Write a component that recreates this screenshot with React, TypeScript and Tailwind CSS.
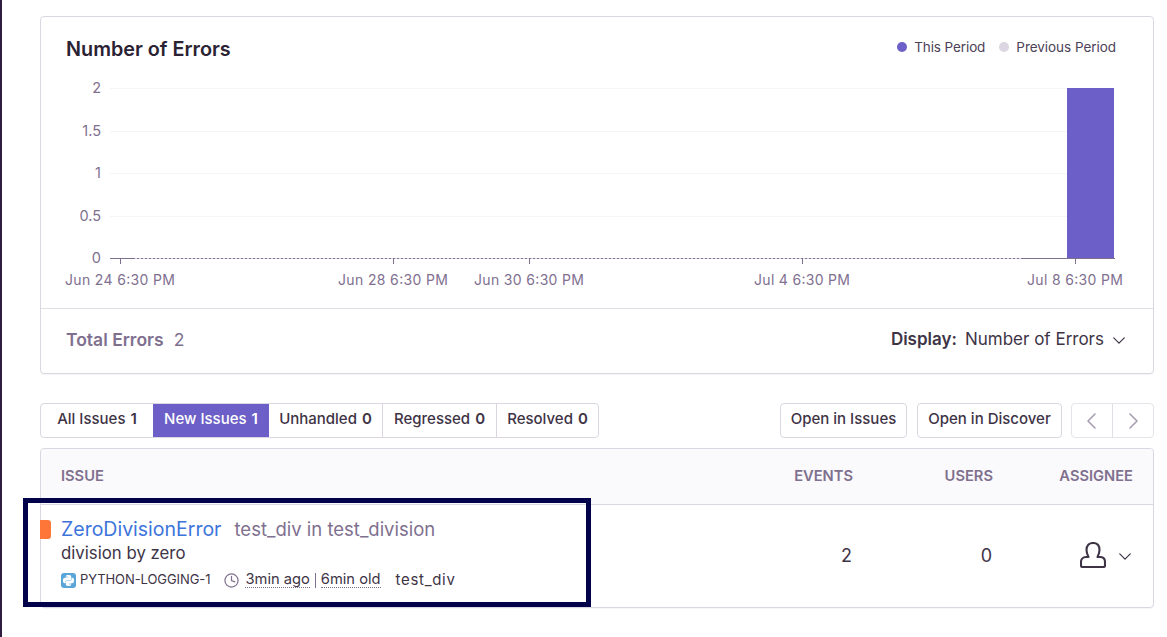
import React from "react";
import { SiPython } from "react-icons/si";

const font = { fontFamily: '"Inter", "Noto Sans", sans-serif' };
const ticks = [
  { x: 120, label: "Jun 24 6:30 PM" },
  { x: 393, label: "Jun 28 6:30 PM" },
  { x: 529, label: "Jun 30 6:30 PM" },
  { x: 802, label: "Jul 4 6:30 PM" },
  { x: 1075, label: "Jul 8 6:30 PM" },
];
const yLabels = [
  { y: 88, label: "2" },
  { y: 130.5, label: "1.5" },
  { y: 173, label: "1" },
  { y: 215.5, label: "0.5" },
  { y: 258, label: "0" },
];

function Chart() {
  return (
    <svg width="1112" height="233" viewBox="41 75 1112 233" className="block">
      {yLabels.map((l) => (
        <g key={l.label}>
          <line x1="110" x2="1115" y1={Math.round(l.y) + 0.5} y2={Math.round(l.y) + 0.5} stroke={l.label === "0" ? "none" : "#f5f4f6"} />
          <text x="101" y={l.y + 5} textAnchor="end" fontSize="14.5" fill="#80708f" fontFamily="Inter, sans-serif">{l.label}</text>
        </g>
      ))}
      <rect x="1067" y="88" width="47" height="170" fill="#6c5fc7" />
      <line x1="110" x2="1115" y1="258.5" y2="258.5" stroke="#80708f" />
      <line x1="135" x2="1023" y1="258.5" y2="258.5" stroke="#dbd6e1" strokeDasharray="2 2" />
      {ticks.map((t) => (
        <g key={t.x}>
          <line x1={t.x + 0.5} x2={t.x + 0.5} y1="258" y2="264" stroke="#80708f" />
          <text x={t.x} y="285" textAnchor="middle" fontSize="14" fill="#80708f" fontFamily="Inter, sans-serif" textLength={t.label.length > 13 ? 110 : 96}>{t.label}</text>
        </g>
      ))}
    </svg>
  );
}

function Chevron({ dir, className }: { dir: "left" | "right" | "down"; className: string }) {
  const d = dir === "left" ? "M11 2 L4 9 L11 16" : dir === "right" ? "M5 2 L12 9 L5 16" : "M2 5.5 L8 11.5 L14 5.5";
  return (
    <svg viewBox={dir === "down" ? "0 0 16 16" : "0 0 16 18"} className={className} fill="none" stroke="currentColor" strokeWidth={dir === "down" ? 1.4 : 1.6} strokeLinecap="round" strokeLinejoin="round">
      <path d={d} />
    </svg>
  );
}

function Tab({ label, count, active }: { label: string; count: string; active?: boolean }) {
  return (
    <div className={`flex h-full items-center justify-center gap-[5px] pb-[2px] ${active ? "bg-[#6c5fc7] text-white" : "text-[#3e3446]"} ${label === "All Issues" ? "w-[112px]" : label === "New Issues" ? "w-[116px]" : label === "Unhandled" ? "w-[114px] border-r border-[#d9d4e0]" : label === "Regressed" ? "w-[114px] border-r border-[#d9d4e0]" : "w-[101px]"}`}>
      <span className="text-[15px] font-medium">{label}</span>
      <span className="text-[15px] font-semibold">{count}</span>
    </div>
  );
}

export default function App() {
  return (
    <div className="relative flex h-[637px] w-[1167px] overflow-hidden bg-white" style={font}>
      <div className="h-full w-[2px] shrink-0 bg-[#2f1d3f]" />
      <main className="ml-[38px] flex w-[1114px] flex-col pt-[16px]">
        <section className="h-[358px] rounded-[4px] border border-[#dbd6e1] shadow-[0_1px_1px_rgba(37,11,54,0.04)]">
          <div className="flex h-[58px] items-start justify-between pl-[25px] pr-[37px]">
            <h2 className="mt-[20px] text-[19.8px] font-semibold leading-[24px] text-[#2b2233]">Number of Errors</h2>
            <div className="mt-[22px] flex items-center text-[13.5px] leading-[16px] text-[#4d4158]">
              <span className="mr-[7px] h-[10px] w-[10px] rounded-full bg-[#6c5fc7]" />
              <span className="tracking-[-0.1px]">This Period</span>
              <span className="ml-[14px] mr-[7px] h-[10px] w-[10px] rounded-full bg-[#dbd6e1]" />
              <span className="tracking-[-0.04px]">Previous Period</span>
            </div>
          </div>
          <Chart />
          <div className="flex h-[65px] items-center justify-between border-t border-[#e2dee6] pb-[2px] pl-[25px] pr-[27px]">
            <div className="flex items-center gap-[10px] text-[#80708f]">
              <span className="text-[17.5px] font-semibold">Total Errors</span>
              <span className="text-[17.5px]">2</span>
            </div>
            <div className="flex items-center text-[#3e3446]">
              <span className="text-[17px] font-semibold">Display:</span>
              <span className="ml-[8px] text-[17px]">Number of Errors</span>
              <Chevron dir="down" className="ml-[8px] h-[14px] w-[14px]" />
            </div>
          </div>
        </section>

        <div className="mt-[29px] flex h-[35px] items-stretch">
          <div className="flex h-full w-[559px] items-center overflow-hidden rounded-[4px] border border-[#dbd6e1]">
            <Tab label="All Issues" count="1" />
            <Tab label="New Issues" count="1" active />
            <Tab label="Unhandled" count="0" />
            <Tab label="Regressed" count="0" />
            <Tab label="Resolved" count="0" />
          </div>
          <button className="ml-[181px] h-full w-[127px] rounded-[4px] border border-[#dbd6e1] pb-[2px] text-[15px] font-medium text-[#3e3446]">Open in Issues</button>
          <button className="ml-[10px] h-full w-[145px] rounded-[4px] border border-[#dbd6e1] pb-[2px] text-[15px] font-medium text-[#3e3446]">Open in Discover</button>
          <div className="ml-[9px] flex h-full w-[83px] rounded-[4px] border border-[#e7e3ea] text-[#a79eb2]">
            <div className="flex w-[41px] items-center justify-center border-r border-[#e2dee6]"><Chevron dir="left" className="h-[18px] w-[16px]" /></div>
            <div className="flex flex-1 items-center justify-center"><Chevron dir="right" className="h-[18px] w-[16px]" /></div>
          </div>
        </div>

        <section className="mt-[10px] h-[160px] rounded-[4px] border border-[#dbd6e1] shadow-[0_1px_1px_rgba(37,11,54,0.04)]">
          <div className="flex h-[56px] items-center rounded-t-[4px] border-b border-[#dbd6e1] bg-[#faf9fb] pl-[20px] pr-[20px] text-[14.7px] font-semibold uppercase text-[#80708f]">
            <span className="flex-1">Issue</span>
            <span className="w-[140px] text-right">Events</span>
            <span className="w-[140px] text-right">Users</span>
            <span className="w-[140px] text-right">Assignee</span>
          </div>
          <div className="relative flex h-[102px] items-center pl-[20px] pr-[20px]">
            <span className="absolute left-[-1px] top-[15px] h-[19px] w-[11px] rounded-r-[3px] bg-[#ff7738]" />
            <div className="flex-1 pb-[3px]">
              <div className="flex items-baseline leading-[24px]">
                <span className="text-[19.5px] text-[#3d74db]">ZeroDivisionError</span>
                <span className="ml-[13px] text-[18.5px] text-[#80708f]">test_div in test_division</span>
              </div>
              <div className="text-[16.8px] leading-[24px] text-[#3e3446]">division by zero</div>
              <div className="mt-[3px] flex h-[24px] items-center text-[13px] text-[#3e3446]">
                <span className="flex h-[15px] w-[15px] items-center justify-center rounded-[3px] bg-[#5aa5d8]">
                  <SiPython className="h-[11px] w-[11px] text-white" />
                </span>
                <span className="ml-[4px] tracking-[-0.08px]">PYTHON-LOGGING-1</span>
                <svg viewBox="0 0 16 16" className="ml-[14px] h-[15px] w-[15px] text-[#80708f]" fill="none" stroke="currentColor" strokeWidth="1.3" strokeLinecap="round">
                  <circle cx="8" cy="8" r="7" />
                  <path d="M8 3.500V8l3.500 1.500" />
                </svg>
                <span className="ml-[6px] border-b border-dotted border-[#80708f] text-[14.7px] leading-[15px]">3min ago</span>
                <span className="mx-[5px] h-[15px] w-px bg-[#80708f]" />
                <span className="border-b border-dotted border-[#80708f] text-[14.7px] leading-[15px]">6min old</span>
                <span className="ml-[15px] text-[15px] tracking-[0.7px]">test_div</span>
              </div>
            </div>
            <span className="mb-[2px] w-[140px] pr-px text-right text-[18px] text-[#3e3446]">2</span>
            <span className="mb-[2px] w-[140px] pr-px text-right text-[18px] text-[#3e3446]">0</span>
            <div className="flex w-[140px] items-center justify-end">
              <svg viewBox="0 0 26 26" className="mb-[2px] h-[26px] w-[26px] text-[#3e3446]" fill="none" stroke="currentColor" strokeWidth="2.100" strokeLinejoin="round">
                <path d="M6.500 8C6.500 3.500 9 1 13 1S19.500 3.500 19.500 8C19.500 11 18.500 13 17.500 15H20C23 15 25 17 25 20V23.500Q25 25 23.500 25H2.500Q1 25 1 23.500V20C1 17 3 15 6 15H8.500C7.500 13 6.500 11 6.500 8Z" />
              </svg>
              <Chevron dir="down" className="ml-[12px] mr-px h-[14px] w-[14px] text-[#3e3446]" />
            </div>
          </div>
        </section>
      </main>
      <div className="pointer-events-none absolute left-[23px] top-[498px] h-[109px] w-[568px] border-[5px] border-[#02024a]" />
    </div>
  );
}
